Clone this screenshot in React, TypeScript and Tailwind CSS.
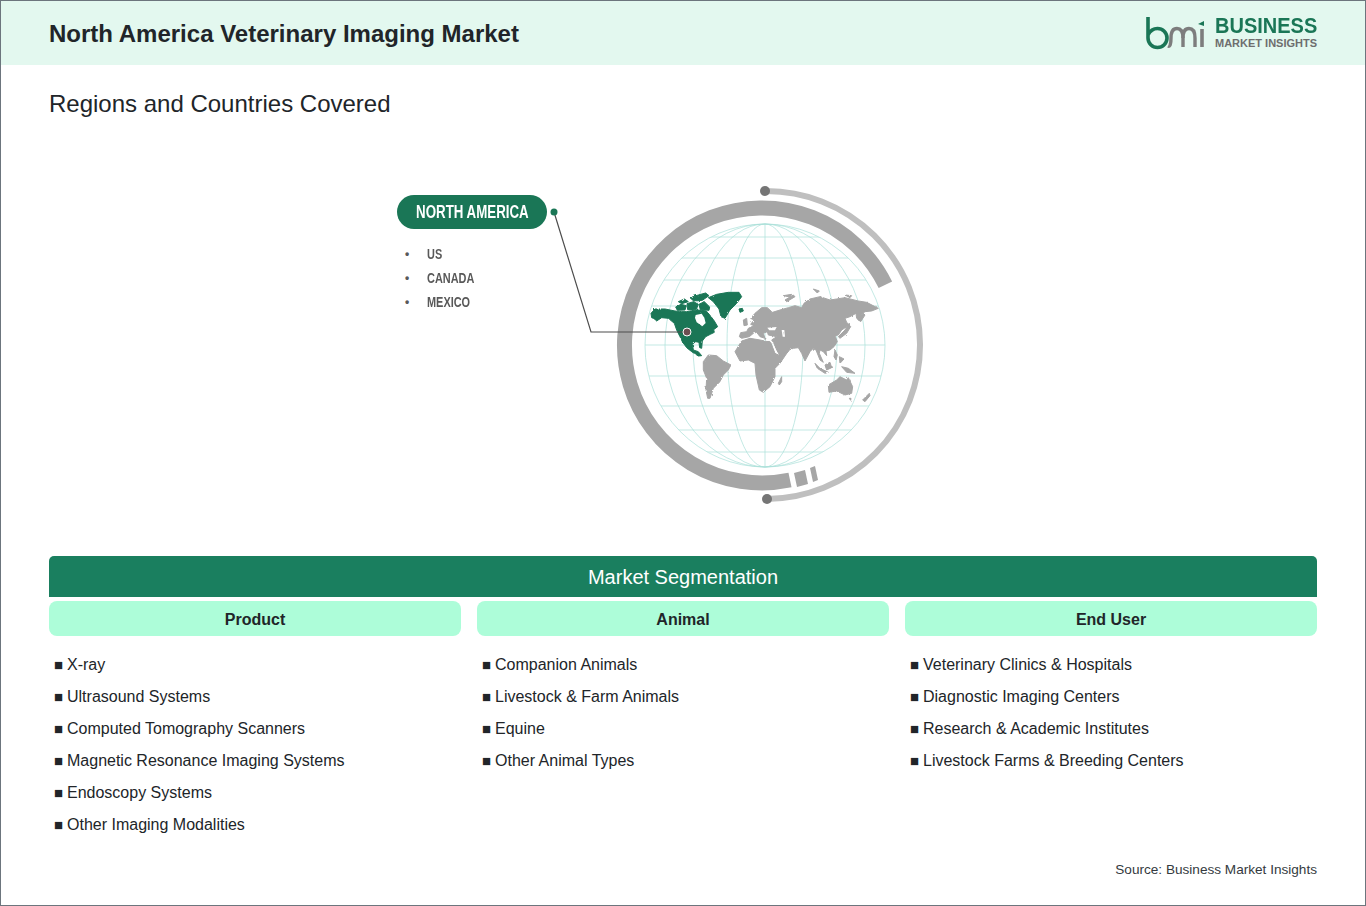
const columns = [
  { title: "Product", items: ["X-ray", "Ultrasound Systems", "Computed Tomography Scanners", "Magnetic Resonance Imaging Systems", "Endoscopy Systems", "Other Imaging Modalities"] },
  { title: "Animal", items: ["Companion Animals", "Livestock & Farm Animals", "Equine", "Other Animal Types"] },
  { title: "End User", items: ["Veterinary Clinics & Hospitals", "Diagnostic Imaging Centers", "Research & Academic Institutes", "Livestock Farms & Breeding Centers"] },
];

const meridians = [38, 72, 100, 120];
const parallels = [237, 258, 280, 306, 345, 376, 406, 430, 452];

const naPolys = [
  "20,98 18,85 30,72 60,72 90,78 110,80 125,80 140,77 155,75 170,76 184,78 196,92 208,108 218,125 206,134 208,142 196,148 182,155 172,168 170,190 164,188 162,172 152,170 142,178 145,195 160,200 170,212 160,213 140,200 125,188 112,170 105,155 95,135 88,115 70,100 50,98 35,108 25,100",
  "190,38 215,28 250,22 282,22 290,35 275,55 255,75 240,100 228,95 222,72 205,50",
  "282,72 292,70 295,78 285,82",
  "92,66 108,58 124,62 120,75 97,76",
  "126,56 146,50 160,58 154,73 128,74",
  "135,38 160,30 182,24 192,32 172,46 146,48",
  "162,58 178,50 194,66 192,76 166,74",
  "100,50 118,42 130,50 110,56",
  "172,138 180,132 184,142 176,146",
];
const saPoly = "175,230 190,210 215,212 235,228 258,240 250,255 235,270 225,290 205,310 195,340 188,340 183,315 185,280 175,255";
const oldWorld = [
  "28,155 32,143 50,140 55,130 72,122 62,118 72,105 62,100 75,85 95,68 112,68 125,80 118,85 150,75 175,68 195,62 215,68 222,55 240,42 270,35 300,45 320,42 345,38 385,48 410,52 445,70 425,78 405,80 395,88 388,108 380,100 378,85 360,95 345,100 350,112 358,120 335,135 325,150 315,152 322,170 312,185 300,195 288,198 290,212 280,200 270,195 268,205 280,232 270,225 258,195 250,190 240,200 225,228 215,205 205,188 190,190 178,195 170,205 150,212 140,195 130,172 125,165 140,155 115,150 112,140 100,145 105,160 90,155 80,142 70,145 58,155 35,160",
  "15,200 35,168 60,160 90,165 122,172 135,205 150,212 175,198 150,235 135,250 135,275 120,305 100,322 88,315 78,270 75,235 55,225 30,228",
  "345,135 358,115 362,125 350,145 330,160 325,155",
  "40,105 50,100 52,120 42,122",
  "165,45 190,30 195,35 170,50",
  "250,12 268,18 262,24",
  "160,32 185,28 180,36",
  "345,30 365,32 360,38",
  "255,235 270,250 295,262 285,265 262,250",
  "285,240 300,232 305,248 290,255",
  "335,245 355,250 375,265 350,262",
  "315,195 322,210 318,225 312,215",
  "328,215 342,222 330,235",
  "295,300 320,285 330,275 350,285 355,278 368,305 365,325 345,330 320,318 297,322",
  "398,345 418,325 420,332 405,350",
  "358,340 363,340 362,346",
  "145,295 155,275 155,290 148,300",
  "385,100 400,85 405,90 392,110",
];

function MapFigure() {
  return (
    <svg viewBox="547 170 380 340" className="w-[380px] h-[340px] shrink-0" role="img" aria-label="World map">
      <defs>
        <clipPath id="globe">
          <ellipse cx="765" cy="345.5" rx="120" ry="121.5" />
        </clipPath>
        <filter id="coast" x="-5%" y="-5%" width="110%" height="110%" colorInterpolationFilters="sRGB">
          <feTurbulence type="fractalNoise" baseFrequency="0.09" numOctaves="2" seed="4" />
          <feDisplacementMap in="SourceGraphic" scale="7" />
          <feGaussianBlur stdDeviation="0.5" />
        </filter>
      </defs>
      <g fill="none" stroke="#a9dfd8" strokeWidth="0.7">
        <g clipPath="url(#globe)">
          {parallels.map((y) => (
            <line key={y} x1="640" x2="890" y1={y} y2={y} />
          ))}
        </g>
        <line x1="765" x2="765" y1="224" y2="467" />
        {meridians.map((r) => (
          <ellipse key={r} cx="765" cy="345.5" rx={r} ry="121.5" />
        ))}
      </g>

      <path d="M 885.4 284.8 A 137.5 137.5 0 1 0 790 480" fill="none" stroke="#a6a6a6" strokeWidth="15" />
      <polygon points="794,473 805,470 808,484 797,487" fill="#a6a6a6" />
      <polygon points="810,468 815,466 818,480 813,482" fill="#a6a6a6" />
      <path d="M 765 191 A 154 154 0 0 1 767 499" fill="none" stroke="#bfbfbf" strokeWidth="6" />
      <circle cx="765" cy="191" r="5" fill="#757575" />
      <circle cx="767" cy="499" r="5" fill="#757575" />

      <g transform="translate(645 285) scale(0.3333)" filter="url(#coast)" strokeLinejoin="round">
        <polygon points={saPoly} fill="#a6a6a6" stroke="#a6a6a6" strokeWidth="3" />
        {naPolys.map((p) => (
          <polygon key={p} points={p} fill="#1a7656" stroke="#1a7656" strokeWidth="3" />
        ))}
        <polygon points="152,90 170,86 178,98 182,114 172,124 155,112 150,98" fill="#ffffff" />
      </g>
      <g transform="translate(730 285) scale(0.3333)" filter="url(#coast)" strokeLinejoin="round">
        <g fill="#a6a6a6" stroke="#a6a6a6" strokeWidth="3">
          {oldWorld.map((p) => (
            <polygon key={p} points={p} />
          ))}
        </g>
        <polygon points="112,128 140,126 135,136 118,136" fill="#ffffff" />
        <polygon points="155,135 163,135 165,155 158,155" fill="#ffffff" />
        <polygon points="125,172 128,172 142,205 138,205" fill="#ffffff" />
      </g>

      <polyline points="554,212 591,332 687,332" fill="none" stroke="#4d4d4d" strokeWidth="1.2" />
      <circle cx="554" cy="212" r="3.5" fill="#1a7656" />
      <circle cx="687" cy="332" r="4" fill="#6d4f52" stroke="#ffffff" strokeWidth="1" />
    </svg>
  );
}

function Logo() {
  return (
    <div className="flex items-center gap-[9px]">
      <svg viewBox="0 0 62 34" className="w-[62px] h-[34px]" aria-hidden="true">
        <path d="M 4 1 V 22 A 9.5 9.5 0 1 0 13.5 12.5 C 9 12.5 6 15 4 19" fill="none" stroke="#1a7656" strokeWidth="3.6" />
        <path d="M 24 30 C 26 31 27 28 27 22 C 27 15 29 12.5 33 12.5 C 37 12.5 39 15 39 22 V 31" fill="none" stroke="#7d7d7d" strokeWidth="3.4" />
        <path d="M 39 22 C 39 15 41 12.5 45 12.5 C 49 12.5 51 15 51 22 V 31" fill="none" stroke="#7d7d7d" strokeWidth="3.4" />
        <path d="M 58 13 V 31" fill="none" stroke="#7d7d7d" strokeWidth="3.6" />
        <path d="M 54 8 L 60 5 V 10 Z" fill="#1a7656" />
      </svg>
      <div className="flex flex-col w-[102px] font-['Liberation_Sans',Arial,sans-serif] font-bold whitespace-nowrap">
        <span className="inline-block origin-left scale-x-[0.93] text-[21.5px] leading-[21px] text-[#1a7656]">BUSINESS</span>
        <span className="text-[11px] leading-[13px] text-[#6e6e6e]">MARKET INSIGHTS</span>
      </div>
    </div>
  );
}

export default function App() {
  return (
    <div className="w-[1366px] h-[906px] box-border border border-[#6c757d] bg-white overflow-hidden font-['Liberation_Sans',Arial,sans-serif] text-[#212529]">
      <header className="h-[64px] bg-[#e3f8ef] flex items-center justify-between pl-[48px] pr-[48px]">
        <h1 className="text-[24px] font-bold leading-none pt-[2px]">North America Veterinary Imaging Market</h1>
        <Logo />
      </header>

      <h2 className="px-[48px] pt-[25px] text-[24px] font-normal leading-[28px]">Regions and Countries Covered</h2>

      <div className="flex pl-[396px] pt-[52px] h-[438px] box-border">
        <div className="w-[150px] shrink-0 pt-[25px]">
          <div className="h-[34px] rounded-full bg-[#1a7656] flex items-center justify-center text-white text-[19px] font-bold whitespace-nowrap">
            <span className="inline-block scale-x-[0.7]">NORTH AMERICA</span>
          </div>
          <ul className="mt-[13px] text-[14px] leading-[24px] text-[#595959] font-bold">
            {["US", "CANADA", "MEXICO"].map((c) => (
              <li key={c} className="flex items-center">
                <span className="w-[30px] pl-[8px] text-[12px]">•</span>
                <span className="inline-block origin-left scale-x-[0.78]">{c}</span>
              </li>
            ))}
          </ul>
        </div>
        <MapFigure />
      </div>

      <section className="mx-[48px]">
        <div className="h-[41px] rounded-t-[5px] bg-[#1a7f5f] flex items-center justify-center text-white text-[20px]">
          Market Segmentation
        </div>
        <div className="grid grid-cols-3 gap-4 mt-[4px]">
          {columns.map((col) => (
            <div key={col.title}>
              <div className="h-[35px] pt-[2px] rounded-[8px] bg-[#adfdd9] flex items-center justify-center text-[16px] font-bold">
                {col.title}
              </div>
              <ul className="mt-[13px] pl-[5px]">
                {col.items.map((it) => (
                  <li key={it} className="h-[32px] flex items-center text-[16px]">
                    <span className="w-[13px] text-[15px] shrink-0">■</span>
                    <span>{it}</span>
                  </li>
                ))}
              </ul>
            </div>
          ))}
        </div>
      </section>

      <div className="mx-[48px] mt-[21px] text-right text-[13.6px] leading-[16px] text-[#343a40]">Source: Business Market Insights</div>
    </div>
  );
}
